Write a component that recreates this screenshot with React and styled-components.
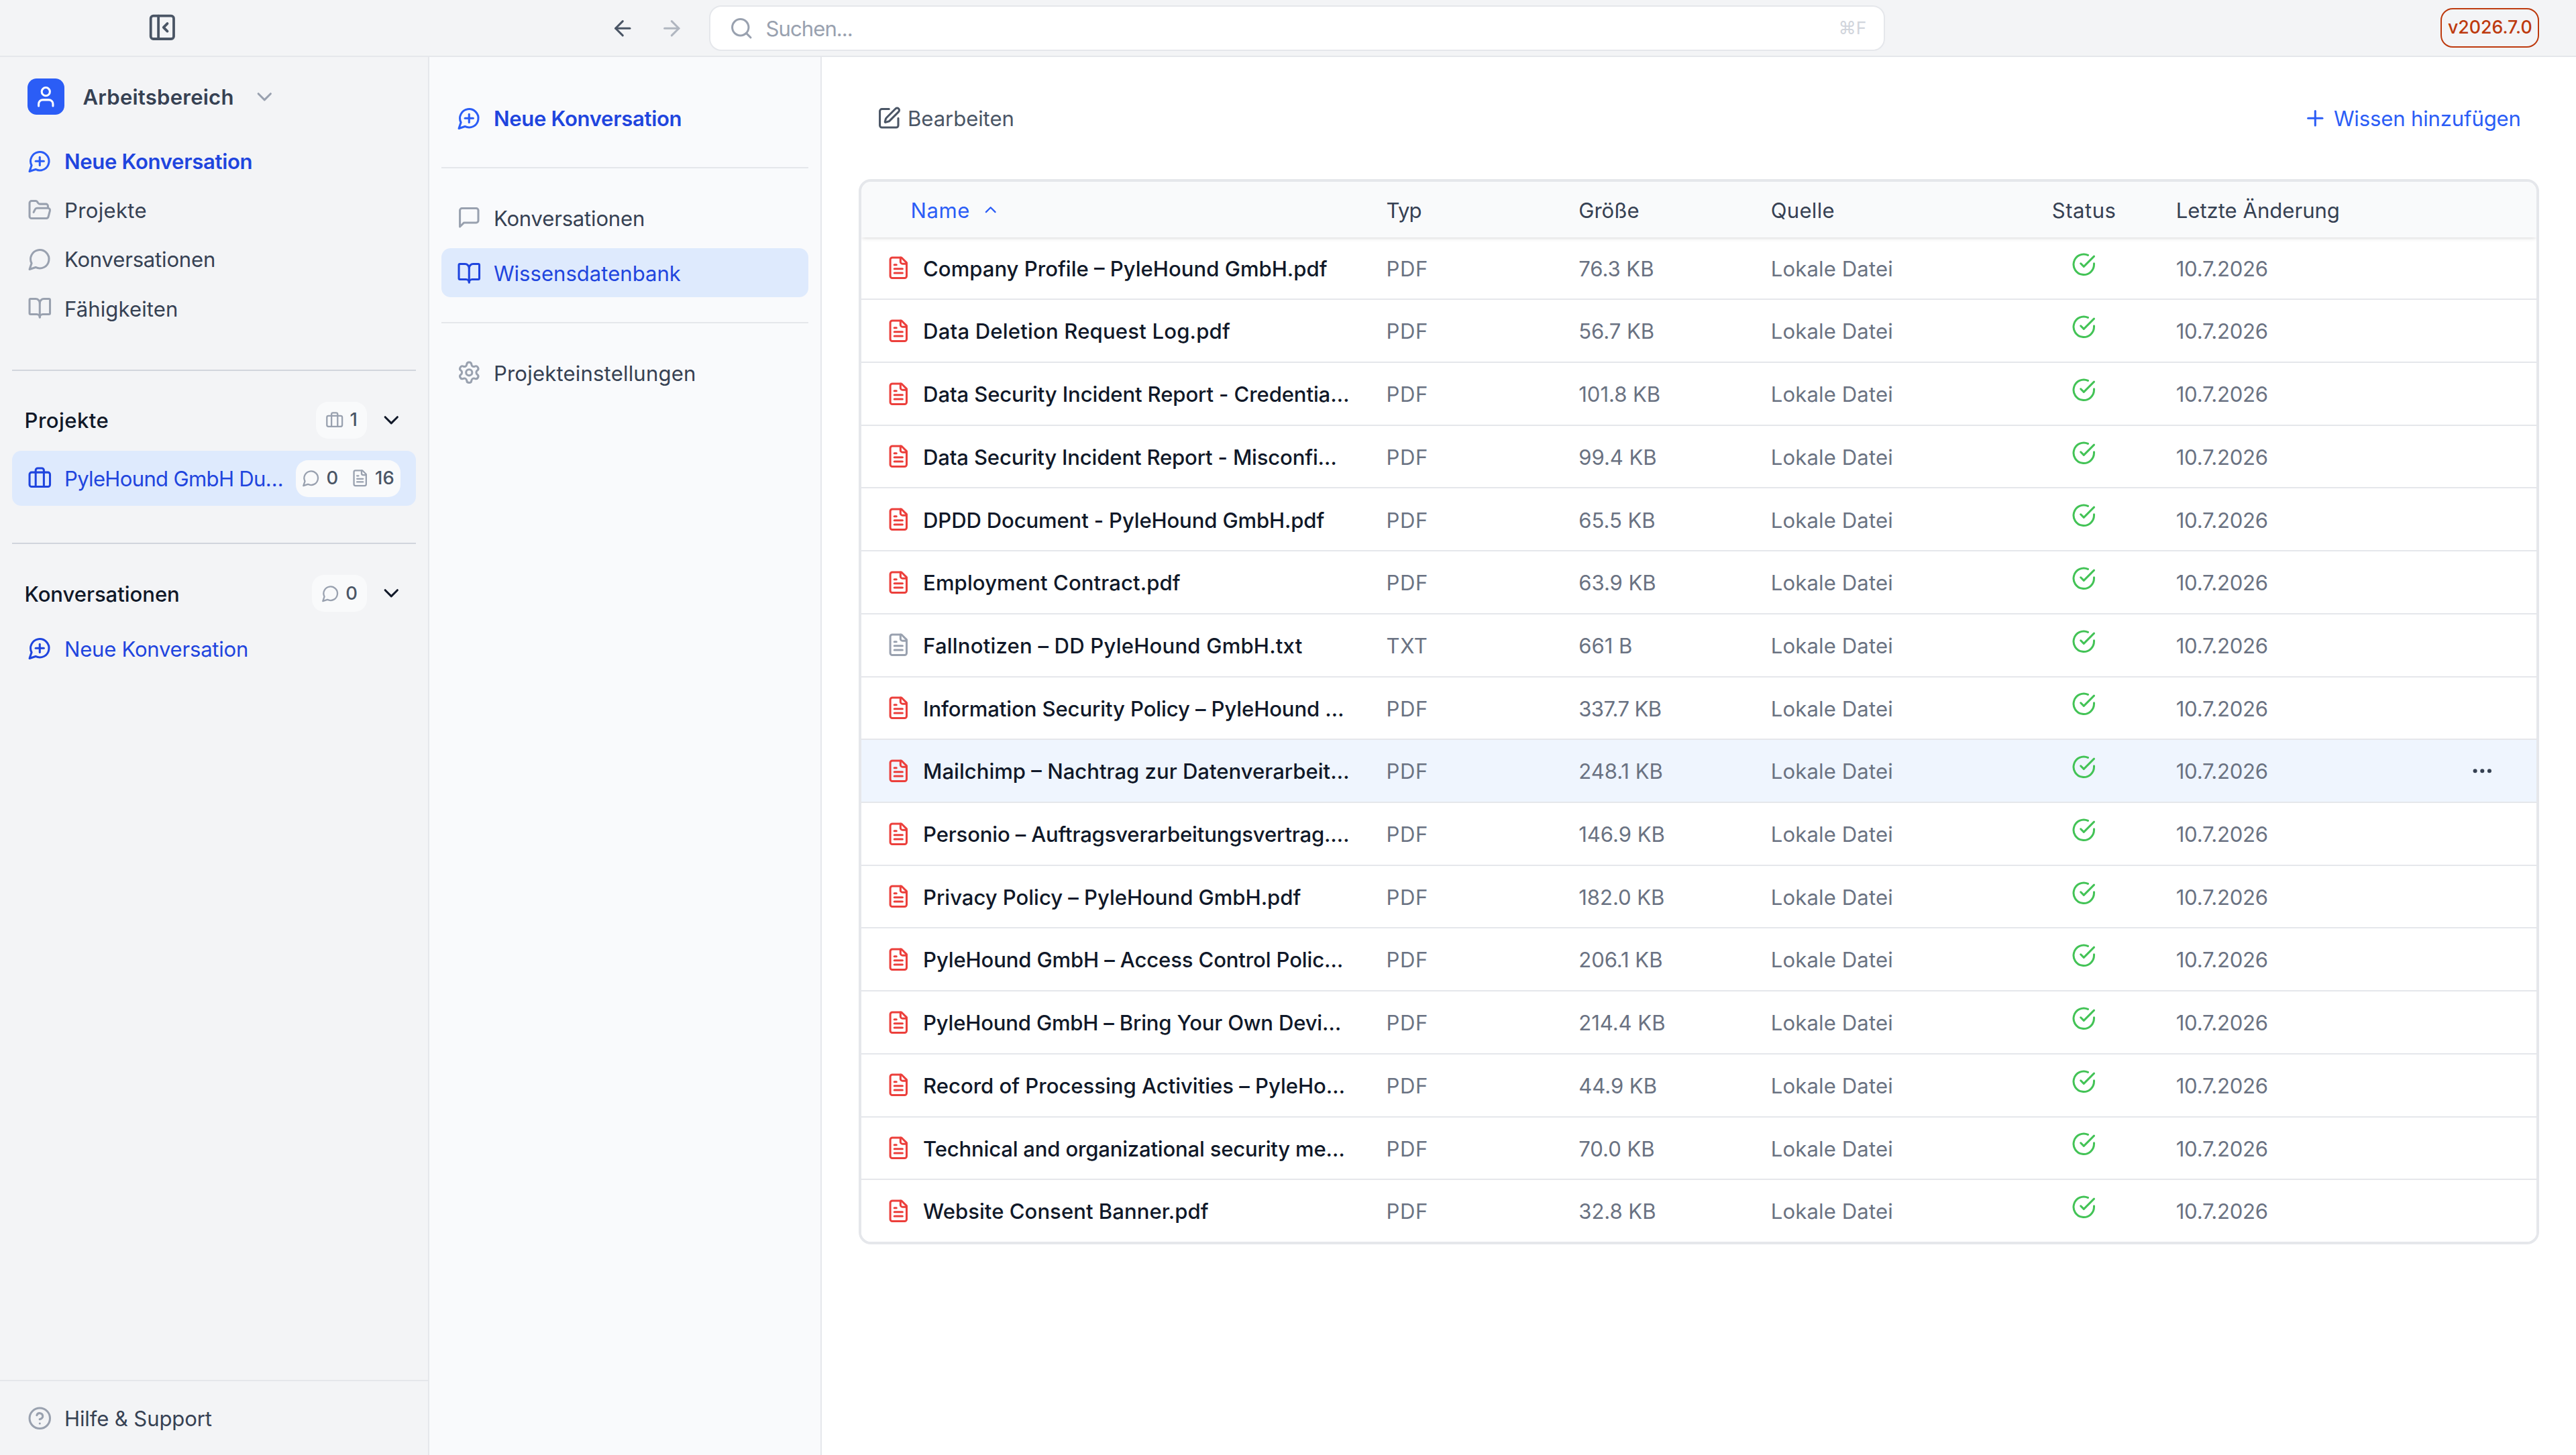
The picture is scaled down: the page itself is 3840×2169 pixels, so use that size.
import styled, { createGlobalStyle, css } from "styled-components";
import {
  ArrowLeft,
  ArrowRight,
  BookOpen,
  Briefcase,
  ChevronDown,
  ChevronUp,
  CircleQuestionMark,
  Ellipsis,
  FolderOpen,
  PanelLeftClose,
  Plus,
  Search,
  Settings,
  SquarePen,
  User,
} from "lucide-react";

const colors = {
  text: "#101828",
  nav: "#364153",
  muted: "#6a7282",
  icon: "#99a1af",
  link: "#1f45de",
  primary: "#2b5df6",
  line: "#e5e7eb",
  selected: "#deeafd",
  soft: "#f9fafb",
};

// 1rem is ten layout units, the window is 168rem wide
const GlobalStyle = createGlobalStyle`
  html {
    font-size: calc(100vw / 168);
  }
  body {
    margin: 0;
    background: #fff;
    color: ${colors.nav};
    font-family: Inter, "Liberation Sans", sans-serif;
    font-size: 1.36rem;
    line-height: 2rem;
  }
  * {
    box-sizing: border-box;
  }
  svg {
    display: block;
    flex-shrink: 0;
  }
`;

const iconSize = css`
  width: ${(props) => props.$size || 1.6}rem;
  height: ${(props) => props.$size || 1.6}rem;
`;

const Icon = styled.span`
  display: block;
  flex-shrink: 0;
  color: ${(props) => props.$color || "inherit"};
  ${iconSize}

  svg {
    width: 100%;
    height: 100%;
  }
`;

const Label = styled.span`
  padding-top: 0.09rem;
  white-space: nowrap;
  letter-spacing: ${(props) => (props.$track || 0) / 31}em;
`;

const Glyph = ({ children }) => (
  <svg
    viewBox="0 0 24 24"
    fill="none"
    stroke="currentColor"
    strokeWidth="2"
    strokeLinecap="round"
    strokeLinejoin="round"
  >
    {children}
  </svg>
);

const Bubble = () => (
  <Glyph>
    <path d="M7.9 20A9 9 0 1 0 4 16.1L2 22Z" />
  </Glyph>
);

const BubblePlus = () => (
  <Glyph>
    <path d="M7.9 20A9 9 0 1 0 4 16.1L2 22Z" />
    <path d="M8 12h8" />
    <path d="M12 8v8" />
  </Glyph>
);

const SquareBubble = () => (
  <Glyph>
    <path d="M21 15a2 2 0 0 1-2 2H7l-4 4V5a2 2 0 0 1 2-2h14a2 2 0 0 1 2 2z" />
  </Glyph>
);

const Doc = () => (
  <Glyph>
    <path d="M15 2H6a2 2 0 0 0-2 2v16a2 2 0 0 0 2 2h12a2 2 0 0 0 2-2V7Z" />
    <path d="M14 2v4a2 2 0 0 0 2 2h4" />
    <path d="M10 9H8" />
    <path d="M16 13H8" />
    <path d="M16 17H8" />
  </Glyph>
);

const Done = () => (
  <Glyph>
    <path d="M22 11.08V12a10 10 0 1 1-5.93-9.14" />
    <path d="m9 11 3 3L22 4" />
  </Glyph>
);

const Screen = styled.div`
  display: flex;
  flex-direction: column;
  height: 100vh;
  overflow: hidden;
`;

const TopBar = styled.header`
  display: flex;
  align-items: center;
  flex-shrink: 0;
  height: 3.7rem;
  padding: 0 2.4rem 0 9.6rem;
  background: #f3f4f6;
  border-bottom: 0.1rem solid ${colors.line};
`;

const History = styled.div`
  display: flex;
  gap: 1.6rem;
  margin-left: 28.2rem;
  padding-top: 0.08rem;
  color: #4a5565;
`;

const SearchBox = styled.div`
  display: flex;
  align-items: center;
  gap: 0.8rem;
  width: 76.7rem;
  height: 3rem;
  margin-top: 0.08rem;
  margin-left: 1.66rem;
  padding: 0 1.15rem 0 1.2rem;
  background: #fff;
  border: 0.1rem solid ${colors.line};
  border-radius: 0.8rem;
  color: ${colors.icon};
`;

const Shortcut = styled.span`
  margin-left: auto;
  color: #d1d5dc;
  font-size: 1.15rem;
`;

const Version = styled.span`
  display: flex;
  align-items: center;
  justify-content: center;
  width: 6.42rem;
  height: 2.6rem;
  margin-left: auto;
  border: 0.1rem solid #bd3a0e;
  border-radius: 0.8rem;
  color: #bd3a0e;
  font-size: 1.17rem;
  font-weight: 500;
`;

const Body = styled.div`
  display: flex;
  flex: 1;
  min-height: 0;
`;

const Sidebar = styled.aside`
  display: flex;
  flex-direction: column;
  flex-shrink: 0;
  width: 28rem;
  background: #f3f4f6;
  border-right: 0.1rem solid ${colors.line};
`;

const SidebarScroll = styled.div`
  flex: 1;
  padding: 0.8rem 0.8rem 0;
`;

const Workspace = styled.div`
  display: flex;
  align-items: center;
  height: 3.6rem;
  margin-bottom: 0.8rem;
  padding: 0 1rem;
  font-weight: 600;
`;

const Avatar = styled.span`
  display: flex;
  align-items: center;
  justify-content: center;
  width: 2.4rem;
  height: 2.4rem;
  margin-right: 1.2rem;
  border-radius: 0.6rem;
  background: ${colors.primary};
  color: #fff;
`;

const WorkspaceChevron = styled(Icon)`
  margin-left: 1.2rem;
`;

const Item = styled.div`
  display: flex;
  align-items: center;
  gap: 0.8rem;
  height: ${(props) => props.$height || 3.2}rem;
  padding: 0 1rem;
  border-radius: 0.6rem;
  background: ${(props) => (props.$selected ? colors.selected : "transparent")};
  color: ${(props) => (props.$link ? colors.link : colors.nav)};
  font-weight: ${(props) => (props.$strong ? 600 : 400)};
`;

const Divider = styled.hr`
  height: 0.1rem;
  margin: ${(props) => props.$margin || "1.6rem 0"};
  border: 0;
  background: ${(props) => props.$color || colors.line};
`;

const Heading = styled.div`
  display: flex;
  align-items: center;
  height: 3.2rem;
  margin-bottom: 0.4rem;
  padding: 0 0.8rem;
  color: ${colors.text};
  font-weight: 500;
`;

const Counter = styled.span`
  display: flex;
  align-items: center;
  gap: 0.4rem;
  height: 2.4rem;
  margin-left: auto;
  margin-right: ${(props) => props.$right || 0}rem;
  padding: 0 ${(props) => props.$pad || 0.6}rem;
  border-radius: 0.8rem;
  background: ${colors.soft};
  color: #4a5565;
  font-size: 1.2rem;
  font-weight: 500;
`;

const CounterSpace = styled.span`
  width: 0;
`;

const SidebarFooter = styled.div`
  height: 4.9rem;
  padding: 0.8rem;
  border-top: 0.1rem solid ${colors.line};
`;

const ProjectNav = styled.nav`
  flex-shrink: 0;
  width: 25.6rem;
  padding: 2.4rem 0.8rem;
  background: #f9fafc;
  border-right: 0.1rem solid ${colors.line};
`;

const ItemStack = styled.div`
  display: flex;
  flex-direction: column;
  gap: 0.4rem;
`;

const Main = styled.main`
  flex: 1;
  min-width: 0;
  padding: 2.4rem;
`;

const Toolbar = styled.div`
  display: flex;
  align-items: center;
  justify-content: space-between;
  height: 3.2rem;
  margin-bottom: 2.4rem;
  padding: 0 1.2rem;
`;

const ToolButton = styled.div`
  display: flex;
  align-items: center;
  gap: 0.4rem;
  color: ${(props) => props.$color};
`;

const Table = styled.div`
  overflow: hidden;
  border: 0.2rem solid ${colors.line};
  border-radius: 0.8rem;
`;

const columns = css`
  display: grid;
  grid-template-columns: 32.6rem 12.54rem 12.54rem 17.66rem 8.76rem 14.5rem 1fr;
  align-items: center;
`;

const HeadRow = styled.div`
  ${columns}
  position: relative;
  height: 3.6rem;
  background: ${colors.soft};
  box-shadow: 0 0.1rem 0.3rem rgba(0, 0, 0, 0.1), 0 0.1rem 0.2rem -0.1rem rgba(0, 0, 0, 0.1);
`;

const Row = styled.div`
  ${columns}
  height: 4.1rem;
  background: ${(props) => (props.$active ? "#eff5fe" : "#fff")};
  border-bottom: 0.1rem solid ${colors.line};
  color: ${colors.muted};

  &:last-child {
    height: 4rem;
    border-bottom: 0;
  }
`;

const Cell = styled.div`
  display: flex;
  align-items: center;
  justify-content: ${(props) => (props.$center ? "center" : "flex-start")};
  padding: 0 1.6rem 0 1.64rem;
`;

const NameHead = styled(Cell)`
  gap: 0.75rem;
  padding-left: 3.22rem;
  color: ${colors.primary};
`;

const NameCell = styled(Cell)`
  gap: 0.83rem;
  padding-left: 1.6rem;
  padding-right: 0;
  color: ${colors.text};
  font-weight: 500;
`;

const StatusIcon = styled(Icon)`
  margin-bottom: 0.5rem;
`;

const MoreIcon = styled(Icon)`
  margin: 0 2.74rem 0 auto;
`;

const files = [
  { name: "Company Profile – PyleHound GmbH.pdf", track: 0, size: "76.3 KB" },
  { name: "Data Deletion Request Log.pdf", track: 0.18, size: "56.7 KB" },
  { name: "Data Security Incident Report - Credentia…", track: -0.12, size: "101.8 KB" },
  { name: "Data Security Incident Report - Misconfi…", track: -0.17, size: "99.4 KB" },
  { name: "DPDD Document - PyleHound GmbH.pdf", track: -0.15, size: "65.5 KB" },
  { name: "Employment Contract.pdf", track: 0.1, size: "63.9 KB" },
  { name: "Fallnotizen – DD PyleHound GmbH.txt", track: 0.2, type: "TXT", size: "661 B" },
  { name: "Information Security Policy – PyleHound …", track: -0.11, size: "337.7 KB" },
  { name: "Mailchimp – Nachtrag zur Datenverarbeit…", size: "248.1 KB", active: true },
  { name: "Personio – Auftragsverarbeitungsvertrag.…", track: -0.17, size: "146.9 KB" },
  { name: "Privacy Policy – PyleHound GmbH.pdf", track: -0.03, size: "182.0 KB" },
  { name: "PyleHound GmbH – Access Control Polic…", track: -0.14, size: "206.1 KB" },
  { name: "PyleHound GmbH – Bring Your Own Devi…", track: -0.2, size: "214.4 KB" },
  { name: "Record of Processing Activities – PyleHo…", track: -0.02, size: "44.9 KB" },
  { name: "Technical and organizational security me…", track: -0.2, size: "70.0 KB" },
  { name: "Website Consent Banner.pdf", track: 0.03, size: "32.8 KB" },
];

const FileRow = ({ file }) => (
  <Row $active={file.active}>
    <NameCell>
      <Icon $color={file.type === "TXT" ? colors.icon : "#ec3f3b"}>
        <Doc />
      </Icon>
      <Label $track={file.track}>{file.name}</Label>
    </NameCell>
    <Cell>
      <Label $track={0.6}>{file.type || "PDF"}</Label>
    </Cell>
    <Cell>
      <Label $track={file.size.includes("7.7") ? -0.6 : -0.05}>{file.size}</Label>
    </Cell>
    <Cell>
      <Label $track={0.12}>Lokale Datei</Label>
    </Cell>
    <Cell $center>
      <StatusIcon $color="#43c356">
        <Done />
      </StatusIcon>
    </Cell>
    <Cell>
      <Label $track={-0.27}>10.7.2026</Label>
    </Cell>
    {file.active && (
      <MoreIcon $color={colors.nav}>
        <Ellipsis />
      </MoreIcon>
    )}
  </Row>
);

export default function App() {
  return (
    <Screen>
      <GlobalStyle />
      <TopBar>
        <Icon $size={2} $color="#4a5565">
          <PanelLeftClose />
        </Icon>
        <History>
          <Icon>
            <ArrowLeft />
          </Icon>
          <Icon $color="#b0b6c0">
            <ArrowRight />
          </Icon>
        </History>
        <SearchBox>
          <Icon>
            <Search />
          </Icon>
          <Label $track={-0.95}>Suchen...</Label>
          <Shortcut>⌘F</Shortcut>
        </SearchBox>
        <Version>v2026.7.0</Version>
      </TopBar>

      <Body>
        <Sidebar>
          <SidebarScroll>
            <Workspace>
              <Avatar>
                <Icon>
                  <User />
                </Icon>
              </Avatar>
              <Label $track={0.22}>Arbeitsbereich</Label>
              <WorkspaceChevron $color={colors.icon}>
                <ChevronDown />
              </WorkspaceChevron>
            </Workspace>
            <Item $link $strong>
              <Icon $color={colors.primary}>
                <BubblePlus />
              </Icon>
              <Label $track={-0.31}>Neue Konversation</Label>
            </Item>
            <Item>
              <Icon $color={colors.icon}>
                <FolderOpen />
              </Icon>
              <Label $track={0.33}>Projekte</Label>
            </Item>
            <Item>
              <Icon $color={colors.icon}>
                <Bubble />
              </Icon>
              <Label $track={-0.2}>Konversationen</Label>
            </Item>
            <Item>
              <Icon $color={colors.icon}>
                <BookOpen />
              </Icon>
              <Label $track={0.1}>Fähigkeiten</Label>
            </Item>

            <Divider $color="#d1d5dc" $margin="2.4rem 0 1.6rem" />
            <Heading>
              <Label $track={0.45}>Projekte</Label>
              <Counter $right={0.8}>
                <Icon $size={1.2} $color={colors.icon}>
                  <Briefcase />
                </Icon>
                1
              </Counter>
              <Icon>
                <ChevronDown />
              </Icon>
            </Heading>
            <Item $link $selected $height={3.6}>
              <Icon>
                <Briefcase />
              </Icon>
              <Label $track={-0.68}>PyleHound GmbH Du…</Label>
              <Counter $pad={0.4}>
                <Icon $size={1.2} $color={colors.icon}>
                  <Bubble />
                </Icon>
                0
                <CounterSpace />
                <Icon $size={1.2} $color={colors.icon}>
                  <Doc />
                </Icon>
                16
              </Counter>
            </Item>

            <Divider $color="#d1d5dc" $margin="2.4rem 0 1.6rem" />
            <Heading>
              <Label $track={-0.05}>Konversationen</Label>
              <Counter $right={0.8}>
                <Icon $size={1.2} $color={colors.icon}>
                  <Bubble />
                </Icon>
                0
              </Counter>
              <Icon>
                <ChevronDown />
              </Icon>
            </Heading>
            <Item $link>
              <Icon>
                <BubblePlus />
              </Icon>
              <Label $track={-0.24}>Neue Konversation</Label>
            </Item>
          </SidebarScroll>
          <SidebarFooter>
            <Item>
              <Icon $color={colors.icon}>
                <CircleQuestionMark />
              </Icon>
              <Label $track={-0.12}>Hilfe &amp; Support</Label>
            </Item>
          </SidebarFooter>
        </Sidebar>

        <ProjectNav>
          <Item $link $strong>
            <Icon $color={colors.primary}>
              <BubblePlus />
            </Icon>
            <Label $track={-0.31}>Neue Konversation</Label>
          </Item>
          <Divider />
          <ItemStack>
            <Item>
              <Icon $color={colors.icon}>
                <SquareBubble />
              </Icon>
              <Label $track={-0.2}>Konversationen</Label>
            </Item>
            <Item $link $selected>
              <Icon>
                <BookOpen />
              </Icon>
              <Label>Wissensdatenbank</Label>
            </Item>
          </ItemStack>
          <Divider />
          <Item>
            <Icon $color={colors.icon}>
              <Settings />
            </Icon>
            <Label $track={0.18}>Projekteinstellungen</Label>
          </Item>
        </ProjectNav>

        <Main>
          <Toolbar>
            <ToolButton $color="#4a5565">
              <Icon>
                <SquarePen />
              </Icon>
              <Label $track={-0.08}>Bearbeiten</Label>
            </ToolButton>
            <ToolButton $color={colors.primary}>
              <Icon>
                <Plus />
              </Icon>
              <Label $track={-0.15}>Wissen hinzufügen</Label>
            </ToolButton>
          </Toolbar>
          <Table>
            <HeadRow>
              <NameHead>
                <Label $track={0.5}>Name</Label>
                <Icon $size={1.2}>
                  <ChevronUp />
                </Icon>
              </NameHead>
              <Cell>
                <Label $track={-0.8}>Typ</Label>
              </Cell>
              <Cell>
                <Label>Größe</Label>
              </Cell>
              <Cell>
                <Label $track={0.25}>Quelle</Label>
              </Cell>
              <Cell $center>
                <Label $track={0.5}>Status</Label>
              </Cell>
              <Cell>
                <Label>Letzte Änderung</Label>
              </Cell>
            </HeadRow>
            {files.map((file) => (
              <FileRow key={file.name} file={file} />
            ))}
          </Table>
        </Main>
      </Body>
    </Screen>
  );
}
